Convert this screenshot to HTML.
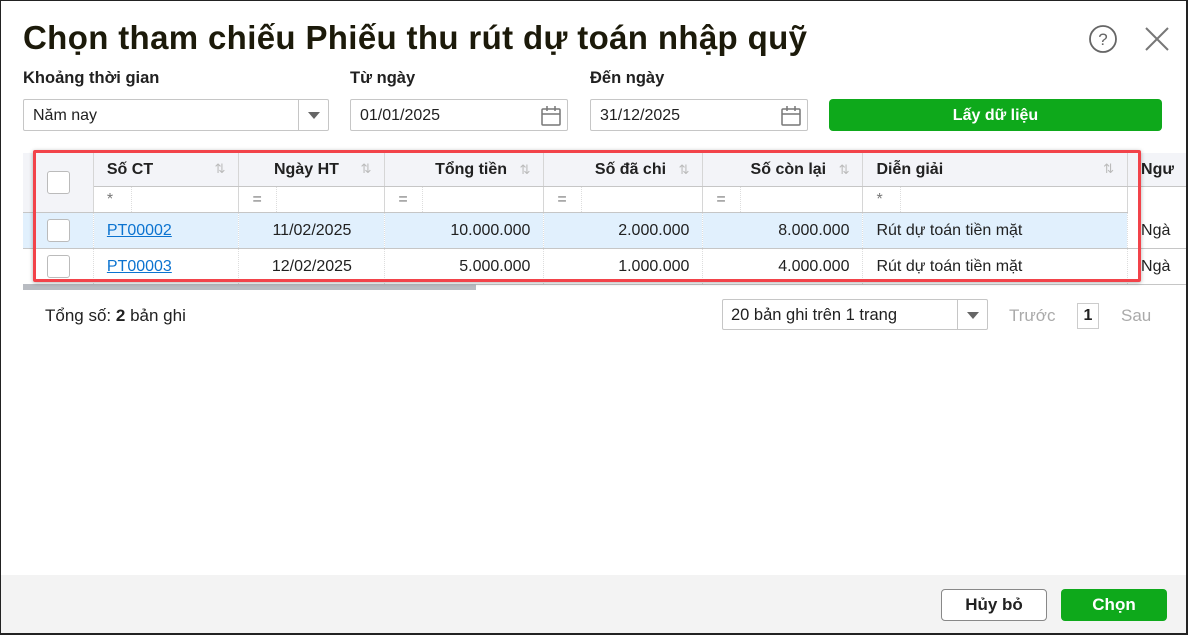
<!DOCTYPE html>
<html><head><meta charset="utf-8"><style>
*{box-sizing:border-box;margin:0;padding:0}
body{width:1188px;height:635px;overflow:hidden;background:#fff;font-family:"Liberation Sans","DejaVu Sans",sans-serif;color:#212121;position:relative}
.frame{position:absolute;left:0;top:0;width:1188px;height:635px;border:1px solid #222;border-right-width:2px;border-bottom-width:2px}
.abs{position:absolute}
h1{position:absolute;left:23px;top:19px;font-size:33px;font-weight:bold;color:#1c1a0a;letter-spacing:0.35px}
.lbl{position:absolute;top:69px;font-size:16.5px;font-weight:bold}
.inp{position:absolute;top:99px;height:32px;border:1px solid #c6c6c6;border-radius:2px;font-size:16px;padding:7px 9px;background:#fff}
.cal{position:absolute;right:5px;top:5px}
.btn{position:absolute;border-radius:4px;font-size:16px;font-weight:bold;text-align:center}
table{border-collapse:collapse;position:absolute;left:23px;top:153px;font-size:16px;table-layout:fixed}
td{border-right:1px solid #d6d6d6;border-bottom:1px solid #c6c6c6;padding:2px 13px 0;white-space:nowrap;overflow:hidden}
tr.h td{background:#f3f4f8;height:33px;font-weight:bold}
tr.f td{background:#fff;height:26px;color:#777;padding:0}
tr.r td{height:36px;border-right:1px dotted #ddd}
tr.sel td{background:#e1f0fd}
.s{color:#bbb;float:right;font-weight:normal;font-size:13px}
.cb{width:23px;height:23px;border:1px solid #bbb;border-radius:3px;background:#fff;margin-left:24px}
.fl{display:inline-block;width:38px;border-right:1px dotted #ddd;height:25px;line-height:26px;padding-left:13px}
a{color:#0b73d0;text-decoration:underline}
</style></head><body>
<h1>Chọn tham chiếu Phiếu thu rút dự toán nhập quỹ</h1>
<svg class="abs" style="left:1088px;top:24px" width="30" height="30" viewBox="0 0 30 30"><circle cx="15" cy="15" r="13" fill="none" stroke="#666" stroke-width="1.8"/><text x="15" y="21" text-anchor="middle" font-size="17" fill="#666" font-family="Liberation Sans">?</text></svg>
<svg class="abs" style="left:1144px;top:26px" width="26" height="26"><path d="M2 2L24 24M24 2L2 24" stroke="#777" stroke-width="2"/></svg>
<div class="lbl" style="left:23px">Khoảng thời gian</div>
<div class="lbl" style="left:350px">Từ ngày</div>
<div class="lbl" style="left:590px">Đến ngày</div>
<div class="inp" style="left:23px;width:306px">Năm nay<div class="abs" style="right:0;top:0;width:30px;height:30px;border-left:1px solid #c6c6c6"><div class="abs" style="left:9px;top:12px;border:6px solid transparent;border-top:7px solid #666;border-bottom:0"></div></div></div>
<div class="inp" style="left:350px;width:218px">01/01/2025<svg class="cal" width="22" height="22"><rect x="2" y="4" width="18" height="16" rx="1" fill="none" stroke="#777" stroke-width="1.5"/><path d="M2 9H20M7 1V6M15 1V6" stroke="#777" stroke-width="1.5"/></svg></div>
<div class="inp" style="left:590px;width:218px">31/12/2025<svg class="cal" width="22" height="22"><rect x="2" y="4" width="18" height="16" rx="1" fill="none" stroke="#777" stroke-width="1.5"/><path d="M2 9H20M7 1V6M15 1V6" stroke="#777" stroke-width="1.5"/></svg></div>
<div class="btn" style="left:829px;top:99px;width:333px;height:32px;background:#0ea91b;color:#fff;line-height:33px">Lấy dữ liệu</div>
<table>
<colgroup><col style="width:71px"><col style="width:147px"><col style="width:147px"><col style="width:160px"><col style="width:160px"><col style="width:161px"><col style="width:267px"><col style="width:55px"></colgroup>
<tr class="h"><td rowspan="2" style="padding:0;background:#f3f4f8"><div class="cb"></div></td><td>Số CT<span class="s">⇅</span></td><td style="text-align:center">Ngày HT<span class="s">⇅</span></td><td style="text-align:right">Tổng tiền <span class="s" style="float:none;margin-left:8px">⇅</span></td><td style="text-align:right">Số đã chi <span class="s" style="float:none;margin-left:8px">⇅</span></td><td style="text-align:right">Số còn lại <span class="s" style="float:none;margin-left:8px">⇅</span></td><td>Diễn giải<span class="s">⇅</span></td><td>Ngư</td></tr>
<tr class="f"><td><span class="fl">*</span></td><td><span class="fl">=</span></td><td><span class="fl">=</span></td><td><span class="fl">=</span></td><td><span class="fl">=</span></td><td><span class="fl">*</span></td><td style="border:0"></td></tr>
<tr class="r sel"><td style="padding:0"><div class="cb"></div></td><td><a>PT00002</a></td><td style="text-align:center">11/02/2025</td><td style="text-align:right">10.000.000</td><td style="text-align:right">2.000.000</td><td style="text-align:right">8.000.000</td><td>Rút dự toán tiền mặt</td><td style="background:#fff">Ngà</td></tr>
<tr class="r"><td style="padding:0"><div class="cb"></div></td><td><a>PT00003</a></td><td style="text-align:center">12/02/2025</td><td style="text-align:right">5.000.000</td><td style="text-align:right">1.000.000</td><td style="text-align:right">4.000.000</td><td>Rút dự toán tiền mặt</td><td>Ngà</td></tr>
</table>
<div class="abs" style="left:23px;top:284px;width:453px;height:6px;background:#b9bcc2"></div>
<div class="abs" style="left:33px;top:150px;width:1108px;height:132px;border:3px solid #f2434a;border-radius:2px;box-shadow:0 1px 4px rgba(0,0,0,.3)"></div>
<div class="abs" style="left:45px;top:306px;font-size:17px">Tổng số: <b>2</b> bản ghi</div>
<div class="inp" style="left:722px;top:299px;width:266px;height:31px;padding:6px 8px;font-size:16.5px">20 bản ghi trên 1 trang<div class="abs" style="right:0;top:0;width:30px;height:29px;border-left:1px solid #c6c6c6"><div class="abs" style="left:9px;top:12px;border:6px solid transparent;border-top:7px solid #666;border-bottom:0"></div></div></div>
<div class="abs" style="left:1009px;top:306px;font-size:17px;color:#aaa">Trước</div>
<div class="abs" style="left:1077px;top:303px;width:22px;height:26px;border:1px solid #ccc;font-size:16px;font-weight:bold;text-align:center;line-height:24px">1</div>
<div class="abs" style="left:1121px;top:306px;font-size:17px;color:#aaa">Sau</div>
<div class="abs" style="left:1px;top:575px;width:1185px;height:58px;background:#f3f3f3"></div>
<div class="btn" style="left:941px;top:589px;width:106px;height:32px;border:1px solid #888;background:#fff;line-height:30px;font-size:17px">Hủy bỏ</div>
<div class="btn" style="left:1061px;top:589px;width:106px;height:32px;background:#0ea91b;color:#fff;line-height:32px;font-size:17px">Chọn</div>
<div class="frame"></div>
</body></html>
